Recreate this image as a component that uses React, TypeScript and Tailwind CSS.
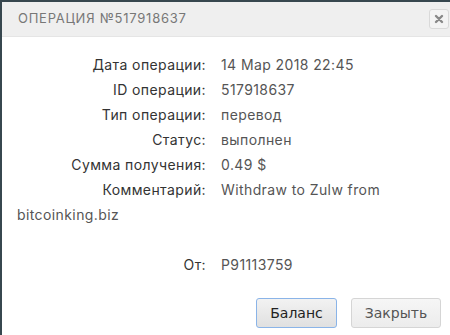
const rows = [
  { label: "Дата операции:", value: "14 Мар 2018 22:45" },
  { label: "ID операции:", value: "517918637" },
  { label: "Тип операции:", value: "перевод" },
  { label: "Статус:", value: "выполнен" },
  { label: "Сумма получения:", value: "0.49 $" },
  { label: "Комментарий:", value: "Withdraw to Zulw from bitcoinking.biz" },
];

function Row({ label, value }: { label: string; value: string }) {
  return (
    <p className="leading-[25px]">
      <span className="inline-block w-[204px] pr-[15px] text-right text-[#333]">{label}</span>
      <span className="text-[#555]">{value}</span>
    </p>
  );
}

export default function App() {
  return (
    <div className="h-[335px] w-[450px] overflow-hidden bg-[#37474f] pl-[2px] pt-[2px] font-['Inter',sans-serif]">
      <div className="h-full w-[460px] bg-white">
        <div className="flex h-[35px] items-center justify-between border-b border-[#e5e5e5] bg-[#efefef] pl-[16px] pr-[13px]">
          <span className="text-[13px] tracking-[0.75px] text-[#777]">ОПЕРАЦИЯ №517918637</span>
          <button className="flex h-[20px] w-[20px] items-center justify-center rounded-[3px] border border-[#d9d9d9] bg-[#f3f3f3]">
            <svg width="10" height="10" viewBox="0 0 10 10">
              <path d="M2 2 L8 8 M8 2 L2 8" stroke="#888" strokeWidth="2.4" strokeLinecap="round" />
            </svg>
          </button>
        </div>
        <div className="w-[430px] pl-[15px] pt-[15px] text-[14px] tracking-[0.4px]">
          {rows.map((r) => (
            <Row key={r.label} label={r.label} value={r.value} />
          ))}
          <p className="h-[25px]" />
          <Row label="От:" value="P91113759" />
        </div>
        <div className="flex w-[448px] justify-end gap-[14px] pr-[9px] pt-[21px] font-['DejaVu_Sans',sans-serif] text-[14px]">
          <button className="h-[30px] w-[81px] rounded-[3px] border border-[#8ab4e8] bg-gradient-to-b from-[#f2f2f2] to-[#e0e0e0] text-[#222]">
            Баланс
          </button>
          <button className="h-[30px] w-[90px] rounded-[3px] border border-[#d5d5d5] bg-gradient-to-b from-[#f6f6f6] to-[#ececec] text-[#555]">
            Закрыть
          </button>
        </div>
      </div>
    </div>
  );
}
